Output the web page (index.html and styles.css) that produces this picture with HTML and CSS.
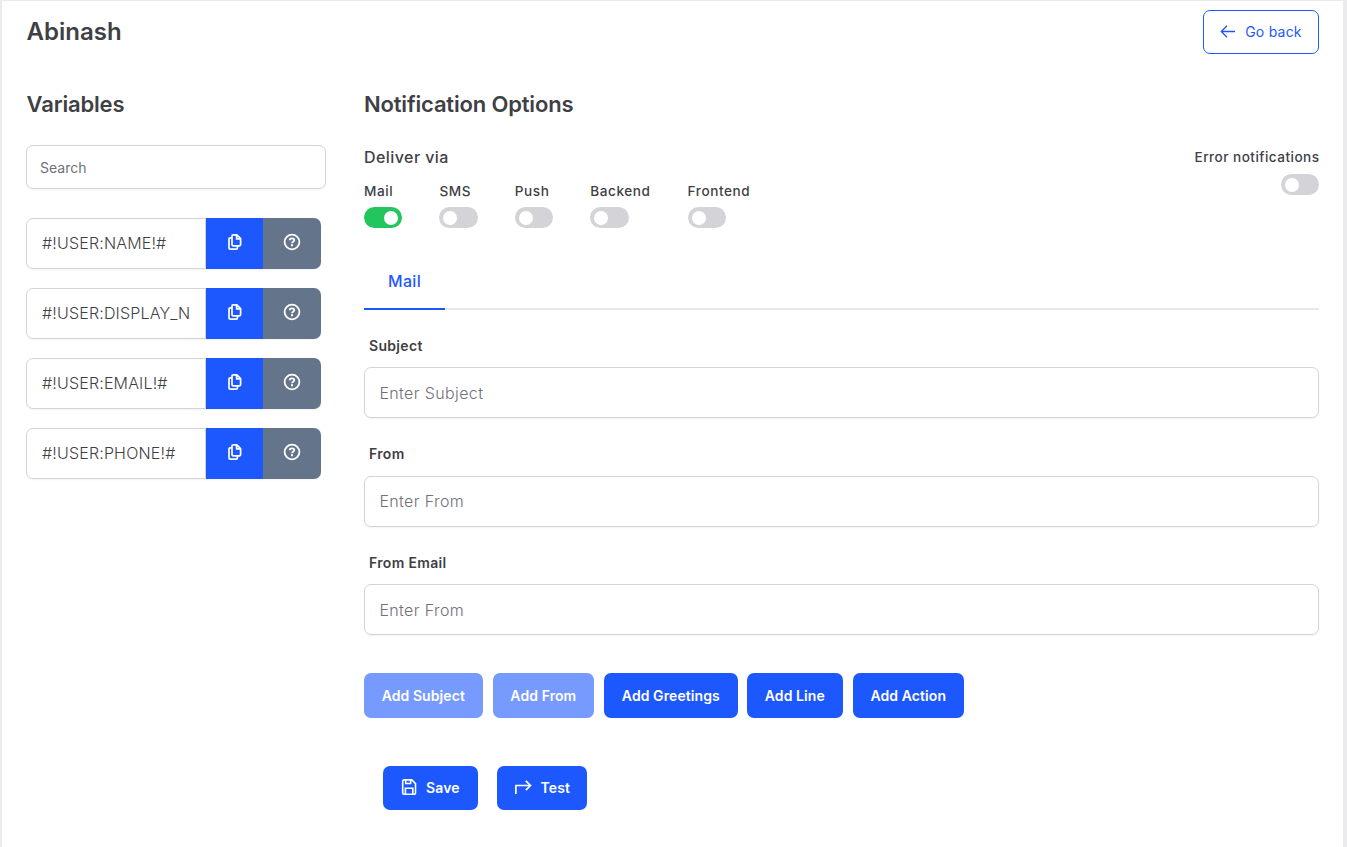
FILE: index.html
```html
<!DOCTYPE html>
<html lang="en">
<head>
<meta charset="utf-8">
<title>Abinash</title>
<link rel="stylesheet" href="styles.css">
</head>
<body>
<svg class="sprite" aria-hidden="true">
  <symbol id="copy" viewBox="0 0 16 18"><path d="M6.2 1.8h3.6l3.8 3.8v6a1.2 1.2 0 0 1-1.2 1.2H6.2A1.2 1.2 0 0 1 5 11.6V3a1.2 1.2 0 0 1 1.2-1.2zM9.6 2v3.9h4M4.8 4.8H3.2A1.2 1.2 0 0 0 2 6v9a1.2 1.2 0 0 0 1.2 1.2h6A1.2 1.2 0 0 0 10.4 15v-2" fill="none" stroke="currentColor" stroke-width="1.7" stroke-linejoin="round"/></symbol>
  <symbol id="help" viewBox="0 0 18 18"><circle cx="9" cy="9" r="7.4" fill="none" stroke="currentColor" stroke-width="1.8"/><path d="M6.7 7.2c0-1.2.8-1.9 2.3-1.9s2.3.7 2.3 1.8c0 1.6-2.3 1.5-2.3 3.1" fill="none" stroke="currentColor" stroke-width="1.8"/><path d="M8 11.3h2v2H8z" fill="currentColor"/></symbol>
</svg>
<div class="page">
  <header class="header">
    <h1 class="title"><span>Abinash</span></h1>
    <button class="btn btn-outline"><svg class="icon-back" viewBox="0 0 16 14"><path d="M15 6.5H1.5M7 .8 1.3 6.5 7 12.2" fill="none" stroke="currentColor" stroke-width="1.3"/></svg><span>Go back</span></button>
  </header>
  <div class="columns">
    <aside class="sidebar">
      <h2 class="heading"><span>Variables</span></h2>
      <div class="search"><span>Search</span></div>
      <div class="variables">
        <div class="variable"><div class="code"><span>#!USER:NAME!#</span></div><button class="copy"><svg class="icon-copy"><use href="#copy"/></svg></button><button class="help"><svg class="icon-help"><use href="#help"/></svg></button></div>
        <div class="variable"><div class="code"><span>#!USER:DISPLAY_N</span></div><button class="copy"><svg class="icon-copy"><use href="#copy"/></svg></button><button class="help"><svg class="icon-help"><use href="#help"/></svg></button></div>
        <div class="variable"><div class="code"><span>#!USER:EMAIL!#</span></div><button class="copy"><svg class="icon-copy"><use href="#copy"/></svg></button><button class="help"><svg class="icon-help"><use href="#help"/></svg></button></div>
        <div class="variable"><div class="code"><span>#!USER:PHONE!#</span></div><button class="copy"><svg class="icon-copy"><use href="#copy"/></svg></button><button class="help"><svg class="icon-help"><use href="#help"/></svg></button></div>
      </div>
    </aside>
    <main class="main">
      <h2 class="heading"><span>Notification Options</span></h2>
      <section class="delivery">
        <div class="channels-block">
          <h3 class="deliver">Deliver via</h3>
          <div class="channels">
            <div class="channel"><span class="label">Mail</span><span class="switch switch-on"></span></div>
            <div class="channel"><span class="label">SMS</span><span class="switch"></span></div>
            <div class="channel"><span class="label">Push</span><span class="switch"></span></div>
            <div class="channel"><span class="label">Backend</span><span class="switch"></span></div>
            <div class="channel"><span class="label">Frontend</span><span class="switch"></span></div>
          </div>
        </div>
        <div class="errors"><span class="label">Error notifications</span><span class="switch"></span></div>
      </section>
      <nav class="tabs"><a class="tab">Mail</a></nav>
      <form class="form">
        <div class="field"><label class="field-label">Subject</label><div class="input"><span>Enter Subject</span></div></div>
        <div class="field"><label class="field-label">From</label><div class="input"><span>Enter From</span></div></div>
        <div class="field"><label class="field-label">From Email</label><div class="input"><span>Enter From</span></div></div>
      </form>
      <div class="adders">
        <button class="btn add-subject disabled">Add Subject</button>
        <button class="btn add-from disabled">Add From</button>
        <button class="btn add-greetings">Add Greetings</button>
        <button class="btn add-line">Add Line</button>
        <button class="btn add-action">Add Action</button>
      </div>
      <div class="actions">
        <button class="btn save"><svg class="icon-save" viewBox="0 0 16 17"><path d="M3 .9h7.8l3.7 3.7v9.3a1.3 1.3 0 0 1-1.3 1.3H3a1.3 1.3 0 0 1-1.3-1.3V2.2A1.3 1.3 0 0 1 3 .9zM4.7 .9v3.6h4.9V.9M4.4 15.2V9.2h7.4v6" fill="none" stroke="currentColor" stroke-width="1.6"/></svg><span>Save</span></button>
        <button class="btn test"><svg class="icon-test" viewBox="0 0 18 15"><path d="M1.9 14V5.5h14.6M11.8 .9l4.7 4.6-4.7 4.6" fill="none" stroke="currentColor" stroke-width="1.7"/></svg><span>Test</span></button>
      </div>
    </main>
  </div>
</div>
</body>
</html>
```
FILE: styles.css
```css
* { box-sizing: border-box; }
html, body { height: 100%; }
body { margin: 0; background: #fff; color: #3f3f46; font-family: Inter, "Liberation Sans", sans-serif; overflow: hidden; }
button { font: inherit; border: 0; padding: 0; margin: 0; }
h1, h2, h3 { margin: 0; }
svg { display: block; flex: none; }
.sprite { display: none; }
.page { height: 847px; border: solid #ebebed; border-width: 1px 4px 0 2px; padding: 9px 24px 0; }
.header { display: flex; justify-content: space-between; height: 44px; align-items: center; }
.title { font-size: 24px; font-weight: 600; line-height: 30px; padding-left: .6px; }
.btn { display: flex; align-items: center; justify-content: center; height: 45px; border-radius: 7px; background: #1d58ff; color: #fff; font-size: 14px; font-weight: 600; letter-spacing: .08px; padding-right: .4px; white-space: nowrap; }
.btn-outline { width: 116px; height: 44px; gap: 9px; background: #fff; border: 1px solid #1d58ff; color: #1d58ff; font-weight: 400; font-size: 14px; letter-spacing: .22px; padding: 0 0 1px; }
.icon-back { width: 16px; height: 14px; }
.columns { display: flex; gap: 38px; padding-top: 35px; }
.sidebar { width: 300px; flex: none; }
.heading { font-size: 22px; font-weight: 600; line-height: 30px; letter-spacing: -.17px; white-space: nowrap; }
.sidebar .heading { padding-left: .6px; }
.search { display: flex; align-items: center; height: 44px; margin-top: 26px; padding: 0 13px; border: 1px solid #d4d4d8; border-radius: 7px; font-size: 14px; color: #71717a; box-shadow: 0 1px 2px rgba(0,0,0,.05); }
.variables { display: grid; gap: 19px; margin-top: 29px; width: 295px; }
.variable { display: flex; height: 51px; border-radius: 7px; box-shadow: 0 1px 2px rgba(0,0,0,.05); }
.code { display: flex; align-items: center; width: 180px; padding: 0 0 2px 15px; border: 1px solid #d4d4d8; border-radius: 7px 0 0 7px; font-size: 16px; font-weight: 300; letter-spacing: .17px; white-space: nowrap; }
.copy, .help { display: flex; align-items: center; justify-content: center; color: #fff; padding-bottom: 3px; }
.copy { width: 57px; background: #1d58ff; }
.help { width: 58px; background: #64748b; border-radius: 0 7px 7px 0; }
.icon-copy { width: 16px; height: 18px; }
.icon-help { width: 18px; height: 18px; }
.main { width: 955px; flex: none; }
.delivery { display: flex; justify-content: space-between; padding-top: 28px; height: 110px; }
.deliver { font-size: 16px; font-weight: 500; line-height: 20px; letter-spacing: .43px; }
.channels { display: flex; gap: 37px; margin-top: 14px; }
.channel { display: flex; flex-direction: column; align-items: flex-start; min-width: 38.4px; }
.label { font-size: 13.6px; font-weight: 500; line-height: 20px; letter-spacing: .58px; white-space: nowrap; }
.errors .label { margin-right: -.5px; letter-spacing: .46px; }
.switch { display: flex; width: 38.4px; height: 21px; margin-top: 6px; padding: 4px; border-radius: 11px; background: #d4d4d8; }
.switch::before { content: ""; width: 14px; height: 14px; border-radius: 50%; background: #fff; }
.switch-on { background: #22c55e; justify-content: flex-end; }
.errors { display: flex; flex-direction: column; align-items: flex-end; }
.errors .switch { margin-top: 7px; }
.tabs { display: flex; height: 81px; align-items: flex-end; border-bottom: 2px solid #e5e7eb; }
.tab { height: 59px; width: 81px; margin-bottom: -2px; padding-top: 2px; display: flex; align-items: center; justify-content: center; border-bottom: 2px solid #1d58ff; color: #1d58ff; font-size: 16px; font-weight: 500; letter-spacing: .3px; }
.form { display: grid; grid-auto-rows: 108.5px; padding-top: 25.9px; }
.field-label { display: block; padding-left: 5px; font-size: 14px; font-weight: 600; line-height: 20px; letter-spacing: .32px; }
.input { display: flex; align-items: center; height: 51px; margin-top: 11.2px; padding: 0 14.4px; border: 1px solid #d4d4d8; border-radius: 7px; color: #71717a; font-size: 16px; font-weight: 300; letter-spacing: .38px; box-shadow: 0 1px 2px rgba(0,0,0,.05); }
.adders { display: flex; margin-top: 11.6px; gap: 10px; }
.disabled { background: #779aff; }
.add-subject { width: 119px; }
.add-from { width: 101px; }
.add-greetings { width: 134px; }
.add-line { width: 96px; margin-left: -1px; }
.add-action { width: 111px; }
.actions { display: flex; gap: 19px; padding: 48px 0 0 19px; }
.actions .btn { height: 44px; gap: 9px; }
.save { width: 95px; }
.test { width: 90px; }
.icon-save { width: 16px; height: 17px; }
.icon-test { width: 18px; height: 15px; }
```
